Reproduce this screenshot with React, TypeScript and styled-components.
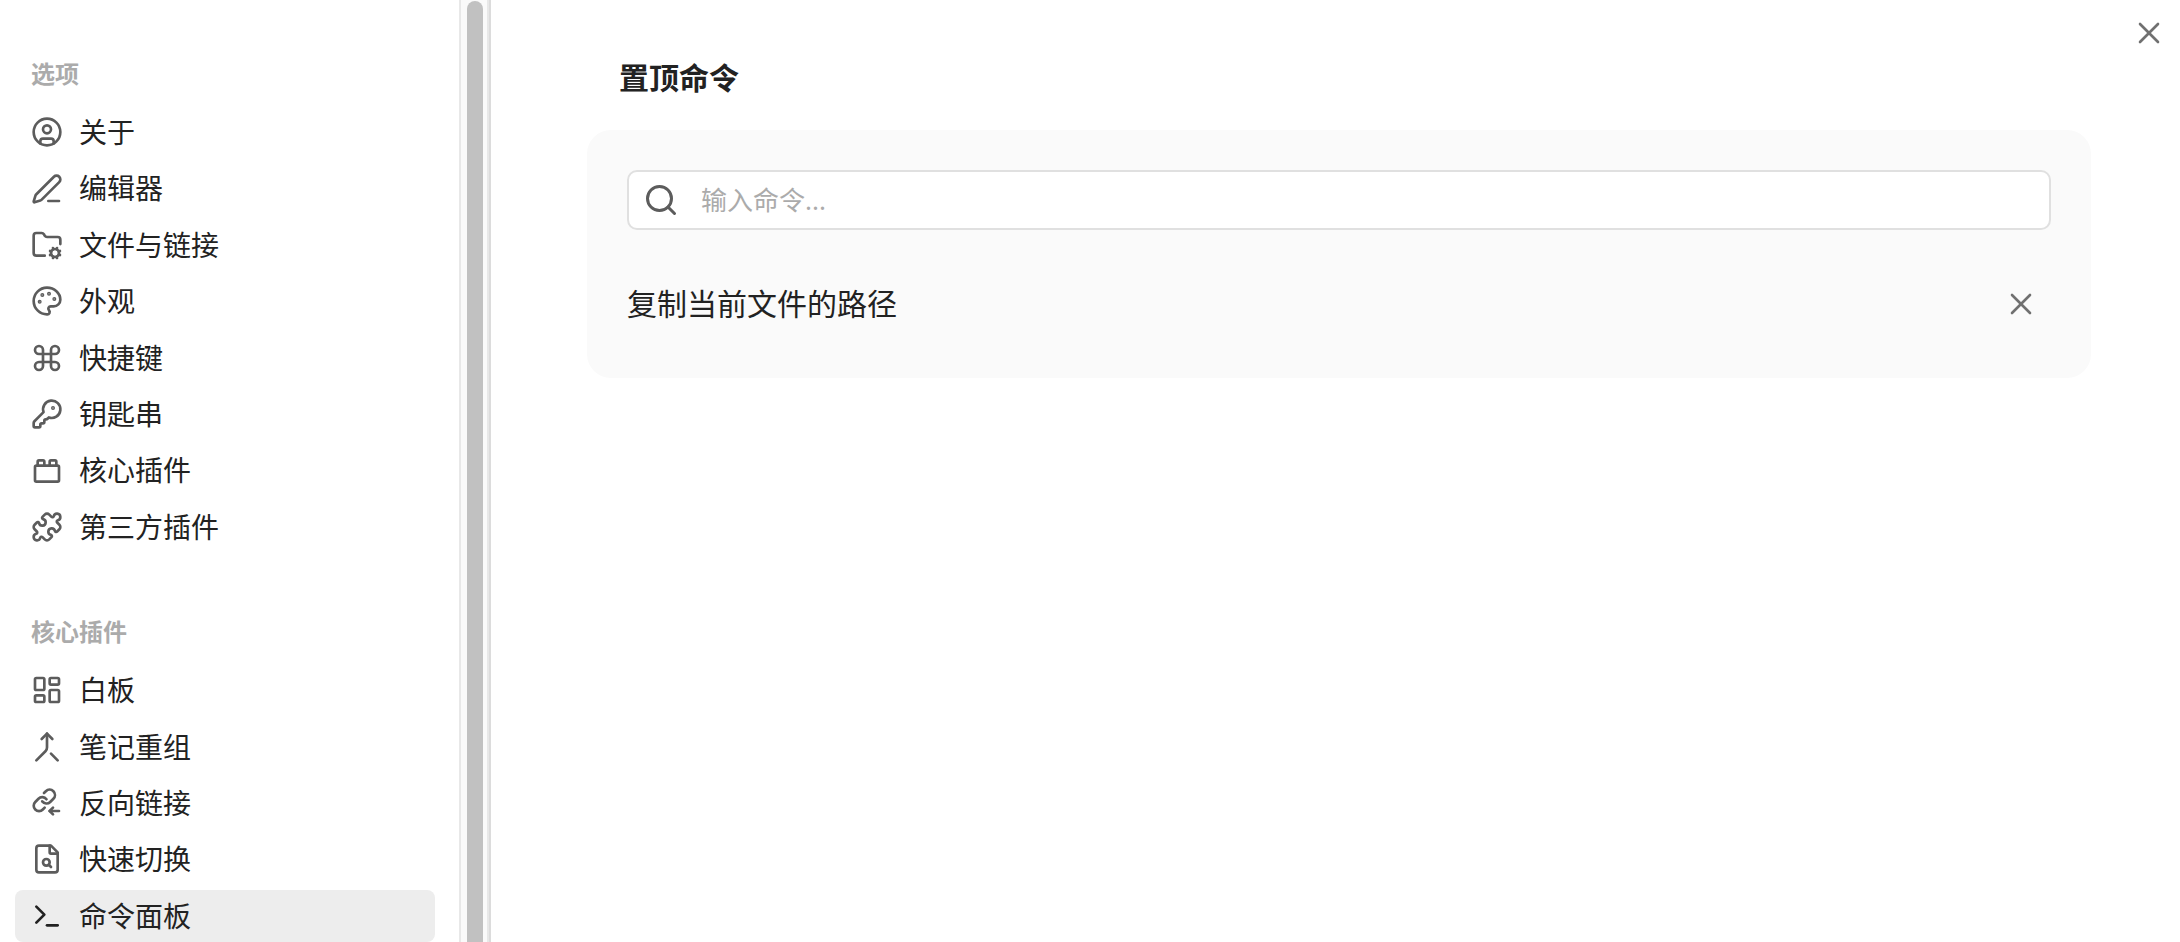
import React from "react";
import styled, { createGlobalStyle } from "styled-components";
import {
  CircleUser, PenLine, FolderCog, Palette, Command, KeyRound, ToyBrick, Puzzle,
  LayoutDashboard, Merge, Terminal, Search, X,
} from "lucide-react";

const GlobalStyle = createGlobalStyle`
  * { box-sizing: border-box; }
  body {
    margin: 0;
    background: #fff;
    color: #222;
    font-family: "Noto Sans", "Noto Sans CJK SC", sans-serif;
  }
`;

const Page = styled.div`
  display: flex;
  height: 100vh;
  overflow: hidden;
`;

const Sidebar = styled.aside`
  flex: none;
  display: flex;
  border-right: 2px solid #dcdcdc;
`;

const Nav = styled.nav`
  width: 459px;
  padding: 56px 24px 0 15px;
  overflow: hidden;
`;

const Group = styled.section`
  padding-bottom: 61px;
`;

const GroupTitle = styled.h2`
  margin: 0 0 14px;
  padding-left: 16px;
  font-size: 24px;
  line-height: 36px;
  font-weight: 700;
  color: #ababab;
`;

const List = styled.ul`
  display: flex;
  flex-direction: column;
  gap: 4px;
  margin: 0;
  padding: 0;
  list-style: none;
`;

const NavItem = styled.a<{ $active?: boolean }>`
  display: flex;
  align-items: center;
  gap: 16px;
  padding: 8px 16px;
  border-radius: 8px;
  background: ${(p) => (p.$active ? "#ededed" : "transparent")};
  color: #222;
  font-size: 28px;
  line-height: 1.3;
  text-decoration: none;

  svg {
    flex: none;
    width: 32px;
    height: 32px;
    stroke-width: 2px;
    color: ${(p) => (p.$active ? "#222" : "#5c5c5c")};
  }
`;

const ScrollTrack = styled.div`
  width: 30px;
  padding: 1px 4px 0 6px;
  border: solid #e8e8e8;
  border-width: 0 2px;
  background: #fafafa;
`;

const ScrollThumb = styled.div`
  height: 100%;
  border-radius: 8px 8px 0 0;
  background: #c1c1c1;
`;

const Main = styled.main`
  position: relative;
  flex: 1;
  min-width: 0;
  padding: 56px 89px 0 96px;
`;

const Title = styled.h1`
  margin: 0 0 30px;
  padding-left: 32px;
  font-size: 30px;
  line-height: 44px;
  font-weight: 700;
`;

const Card = styled.section`
  padding: 40px 40px 50px;
  border-radius: 24px;
  background: #fafafa;
`;

const SearchBox = styled.label`
  display: flex;
  align-items: center;
  gap: 22px;
  height: 60px;
  padding: 0 14px;
  border: 2px solid #e0e0e0;
  border-radius: 10px;
  background: #fff;
  color: #5c5c5c;
`;

const SearchInput = styled.input`
  flex: 1;
  min-width: 0;
  padding: 0;
  border: 0;
  outline: 0;
  background: transparent;
  color: #222;
  font: inherit;
  font-size: 26px;
  line-height: 40px;

  &::placeholder {
    color: #ababab;
    opacity: 1;
  }
`;

const CommandRow = styled.div`
  display: flex;
  align-items: center;
  justify-content: space-between;
  margin-top: 50px;
  padding-right: 12px;
  font-size: 30px;
  line-height: 48px;
`;

const IconButton = styled.button`
  display: flex;
  padding: 0;
  border: 0;
  background: transparent;
  color: #707070;
`;

const CloseButton = styled(IconButton)`
  position: absolute;
  top: 15px;
  right: 13px;
`;

const Drawing = ({ children }: { children: React.ReactNode }) => (
  <svg viewBox="0 0 24 24" fill="none" stroke="currentColor" strokeLinecap="round" strokeLinejoin="round" aria-hidden="true">
    {children}
  </svg>
);

const BacklinkIcon = () => (
  <Drawing>
    <path d="M8.4 10.8a4 4 0 0 0 6 .4l2.4-2.4a4 4 0 0 0-5.66-5.66l-1.4 1.4" />
    <path d="M11.6 9.2a4 4 0 0 0-6-.4l-2.4 2.4a4 4 0 0 0 5.66 5.66l1.4-1.4" />
    <path d="M21 18h-7" />
    <path d="m16.5 15.5-2.5 2.5 2.5 2.5" />
  </Drawing>
);

const FileSearchIcon = () => (
  <Drawing>
    <path d="M15 2H6a2 2 0 0 0-2 2v16a2 2 0 0 0 2 2h12a2 2 0 0 0 2-2V7z" />
    <path d="M14 2v5a1 1 0 0 0 1 1h5" />
    <circle cx="11.5" cy="14.5" r="2.5" />
    <path d="M13.3 16.3 15 18" />
  </Drawing>
);

const groups = [
  {
    title: "选项",
    items: [
      { label: "关于", icon: CircleUser },
      { label: "编辑器", icon: PenLine },
      { label: "文件与链接", icon: FolderCog },
      { label: "外观", icon: Palette },
      { label: "快捷键", icon: Command },
      { label: "钥匙串", icon: KeyRound },
      { label: "核心插件", icon: ToyBrick },
      { label: "第三方插件", icon: Puzzle },
    ],
  },
  {
    title: "核心插件",
    items: [
      { label: "白板", icon: LayoutDashboard },
      { label: "笔记重组", icon: Merge },
      { label: "反向链接", icon: BacklinkIcon },
      { label: "快速切换", icon: FileSearchIcon },
      { label: "命令面板", icon: Terminal, active: true },
    ],
  },
];

export default function App() {
  return (
    <Page>
      <GlobalStyle />
      <Sidebar>
        <Nav>
          {groups.map((group) => (
            <Group key={group.title}>
              <GroupTitle>{group.title}</GroupTitle>
              <List>
                {group.items.map(({ label, icon: Icon, ...item }) => {
                  const active = "active" in item;
                  return (
                    <li key={label}>
                      <NavItem href="#" $active={active} aria-current={active ? "page" : undefined}>
                        <Icon />
                        {label}
                      </NavItem>
                    </li>
                  );
                })}
              </List>
            </Group>
          ))}
        </Nav>
        <ScrollTrack>
          <ScrollThumb />
        </ScrollTrack>
      </Sidebar>
      <Main>
        <CloseButton type="button" aria-label="关闭">
          <X size={36} strokeWidth={1.75} />
        </CloseButton>
        <Title>置顶命令</Title>
        <Card>
          <SearchBox>
            <Search size={36} strokeWidth={2} />
            <SearchInput type="text" placeholder="输入命令..." aria-label="输入命令" />
          </SearchBox>
          <CommandRow>
            <span>复制当前文件的路径</span>
            <IconButton type="button" aria-label="移除">
              <X size={36} strokeWidth={1.75} />
            </IconButton>
          </CommandRow>
        </Card>
      </Main>
    </Page>
  );
}
